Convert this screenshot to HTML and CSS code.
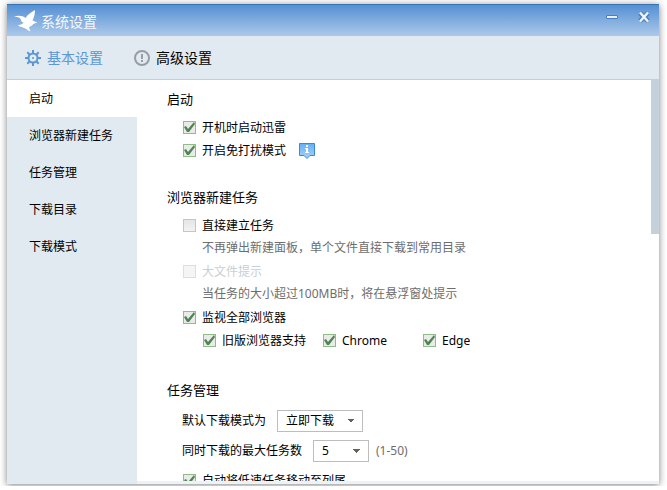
FILE: index.html
```html
<!DOCTYPE html>
<html lang="zh-CN">
<head>
<meta charset="utf-8">
<title>系统设置</title>
<link rel="stylesheet" href="styles.css">
</head>
<body>
<div class="stage">
<div class="window">
  <header class="titlebar">
    <svg class="logo" viewBox="0 0 24 22" aria-hidden="true"><path fill="#fff" d="M0 6.500C4 5 9 5.500 11.500 8C14 4 18 2 21 0C21 4 20 8 18.500 10.500C20 11 21.500 12 23.500 12.500C21 13 19.500 13.500 18.500 15C17.500 16 15.500 16.500 15 17.500L16.500 21.500C13 20.500 12 18 9 17.500C7 17 5 16.500 4 15C7 15 9 14 9.500 12.500C6.500 12.500 7.500 8.500 5 7.500C3.500 7 2 7 0 6.500Z"/></svg>
    <h1 class="title">系统设置</h1>
    <button class="winbtn minimize" aria-label="最小化"><svg viewBox="0 0 12 12"><rect x="0.500" y="4.500" width="11" height="3" rx="0.500" fill="#e8eff8" stroke="#4b7fbc"/></svg></button>
    <button class="winbtn" aria-label="关闭"><svg viewBox="0 0 12 12"><path d="M2 2 L10 10 M10 2 L2 10" stroke="#4b7fbc" stroke-width="5"/><path d="M2 1.500 L10 10.500 M10 1.500 L2 10.500" stroke="#edf3fa" stroke-width="2.500"/></svg></button>
  </header>
  <nav class="tabs">
    <a class="tab active" href="#basic"><svg viewBox="0 0 16 16" fill="none" stroke="currentColor"><circle cx="8" cy="8" r="4.500" stroke-width="2"/><circle cx="8" cy="8" r="1" fill="currentColor" stroke="none"/><path stroke-width="2" d="M8 0V3M8 13V16M0 8H3M13 8H16M2.300 2.300L4.500 4.500M11.500 11.500L13.700 13.700M2.300 13.700L4.500 11.500M11.500 4.500L13.700 2.300"/></svg>基本设置</a>
    <a class="tab" href="#advanced"><svg class="muted" viewBox="0 0 16 16" fill="none" stroke="currentColor" stroke-width="2"><circle cx="8" cy="8" r="7"/><path d="M8 4V9M8 10V12"/></svg>高级设置</a>
  </nav>
  <div class="body">
    <nav class="sidebar">
      <a class="current" href="#start">启动</a>
      <a href="#browser">浏览器新建任务</a>
      <a href="#tasks">任务管理</a>
      <a href="#folder">下载目录</a>
      <a href="#mode">下载模式</a>
    </nav>
    <main class="content">
      <section id="start">
        <h2>启动</h2>
        <div class="row"><label class="check"><input type="checkbox" checked>开机时启动迅雷</label></div>
        <div class="row"><label class="check"><input type="checkbox" checked>开启免打扰模式</label><svg class="info" viewBox="0 0 16 16" role="img" aria-label="说明"><defs><linearGradient id="blue" x2="0" y2="1"><stop stop-color="#65aff5"/><stop offset="1" stop-color="#a4d3fb"/></linearGradient></defs><path fill="url(#blue)" stroke="#3e88cf" d="M0.500 0.500H15.500V12.500H11L8 15.500L5 12.500H0.500Z"/><path fill="#fff" d="M7 2H9V4H7ZM6 5H9V9H10V10H6V9H7V6H6Z"/></svg></div>
      </section>
      <section id="browser">
        <h2>浏览器新建任务</h2>
        <div class="row"><label class="check"><input type="checkbox">直接建立任务</label></div>
        <p class="hint">不再弹出新建面板，单个文件直接下载到常用目录</p>
        <div class="row"><label class="check"><input type="checkbox" disabled>大文件提示</label></div>
        <p class="hint">当任务的大小超过100MB时，将在悬浮窗处提示</p>
        <div class="row"><label class="check"><input type="checkbox" checked>监视全部浏览器</label></div>
        <div class="row browsers">
          <label class="check"><input type="checkbox" checked>旧版浏览器支持</label>
          <label class="check"><input type="checkbox" checked>Chrome</label>
          <label class="check"><input type="checkbox" checked>Edge</label>
        </div>
      </section>
      <section id="tasks">
        <h2>任务管理</h2>
        <div class="fields">
          <div class="field"><label for="defmode">默认下载模式为</label><select id="defmode" class="wide"><option>立即下载</option></select></div>
          <div class="field"><label for="maxtasks">同时下载的最大任务数</label><select id="maxtasks"><option>5</option></select><span class="range">(1-50)</span></div>
        </div>
        <div class="row"><label class="check"><input type="checkbox" checked>自动将低速任务移动至列尾</label></div>
      </section>
    </main>
    <div class="scrollbar"><div class="thumb"></div></div>
  </div>
</div>
</div>
</body>
</html>
```
FILE: styles.css
```css
* { box-sizing: border-box; }
body {
  margin: 0;
  height: 100vh;
  padding-bottom: 4px;
  overflow: hidden;
  background: #fff;
  color: #000;
  font: 12px/24px "Noto Sans", "Noto Sans CJK SC", sans-serif;
}
.stage {
  height: 100%;
  padding: 4px 8px 2px 7px;
  overflow: hidden;
}
.window {
  display: flex;
  flex-direction: column;
  height: 100%;
  background: #fff;
  box-shadow: 0 1px 7px rgba(0, 0, 0, 0.5);
}
h1, h2, p { margin: 0; font-weight: normal; }
a { color: inherit; text-decoration: none; }
svg { display: block; flex: none; }

.titlebar {
  display: flex;
  flex: none;
  align-items: center;
  height: 32px;
  padding: 0 9px 0 7px;
  border-top: 1px solid #3574b5;
  background: linear-gradient(#5490d3, #adc9ea);
}
.logo { width: 24px; height: 22px; }
.title {
  flex: 1;
  padding: 2px 0 0 3px;
  color: #f4f8fd;
  font-size: 14px;
}
.winbtn {
  width: 12px;
  height: 12px;
  margin-bottom: 8px;
  padding: 0;
  border: 0;
  background: none;
}
.minimize { margin-right: 20px; }

.tabs {
  display: flex;
  flex: none;
  align-items: center;
  gap: 31px;
  height: 44px;
  padding: 0 18px;
  border-bottom: 1px solid #c9ced2;
  background: #e1e9f1;
}
.tab {
  display: flex;
  align-items: center;
  gap: 6px;
  font-size: 14px;
}
.tab svg { width: 16px; height: 16px; }
.active { color: #5b97d5; }
.muted { color: #989da5; }

.body { display: flex; flex: 1; min-height: 0; }
.sidebar { flex: none; width: 130px; background: #e1e9f1; }
.sidebar a { display: block; padding-left: 22px; line-height: 37px; }
.sidebar .current { background: #fff; }
.content {
  flex: 1;
  min-width: 0;
  padding: 7px 0 0 30px;
  overflow: hidden;
  border-bottom: 3px solid #edf2f6;
}
section { margin-bottom: 23px; }
h2 { margin-bottom: 5px; font-size: 13px; line-height: 24px; }
.row { display: flex; align-items: center; height: 23px; padding-left: 16px; }
.check { display: flex; align-items: center; gap: 6px; }
.check input {
  appearance: none;
  width: 13px;
  height: 13px;
  margin: 0;
  border: 1px solid #c5c5c5;
  background: linear-gradient(#e5e5e5, #f2f2f2);
}
.check input:checked {
  border-color: #92bb8b;
  background: #e8ebe7;
}
.check input:checked::before {
  content: "";
  display: block;
  width: 11px;
  height: 11px;
  background: #518454;
  clip-path: polygon(0 5px, 2px 4px, 4px 7px, 10px 0, 11px 2px, 5px 10px, 3px 10px);
}
.check:has(:disabled) { color: #c9cfd3; }
.check input:disabled { border-color: #dedede; background: #f5f5f5; }
.info { width: 16px; height: 16px; margin-left: 13px; }
.hint { height: 23px; padding-left: 35px; line-height: 22px; color: #6d6d6d; }
.browsers { margin-bottom: 26px; padding-left: 36px; }
.browsers .check { width: 100px; }
.browsers .check:first-child { width: 120px; }
.fields {
  display: grid;
  gap: 8px;
  padding: 3px 0 7px 15px;
}
.field { display: flex; align-items: center; height: 22px; }
select {
  appearance: none;
  width: 56px;
  height: 22px;
  margin: 0 7px 0 11px;
  padding: 0 8px;
  border: 1px solid #bdbdbd;
  border-radius: 0;
  background:
    linear-gradient(to top right, transparent 50%, #646458 50%) right 11px center / 4px 4px no-repeat,
    linear-gradient(to top left, transparent 50%, #646458 50%) right 7px center / 4px 4px no-repeat,
    #fff;
  color: #000;
  font: inherit;
  line-height: 20px;
}
.wide { width: 86px; }
.range { color: #6d6d6d; }
.scrollbar { flex: none; width: 8px; border-bottom: 3px solid #edf2f6; }
.thumb { height: 154px; background: #c4d1da; }
```
